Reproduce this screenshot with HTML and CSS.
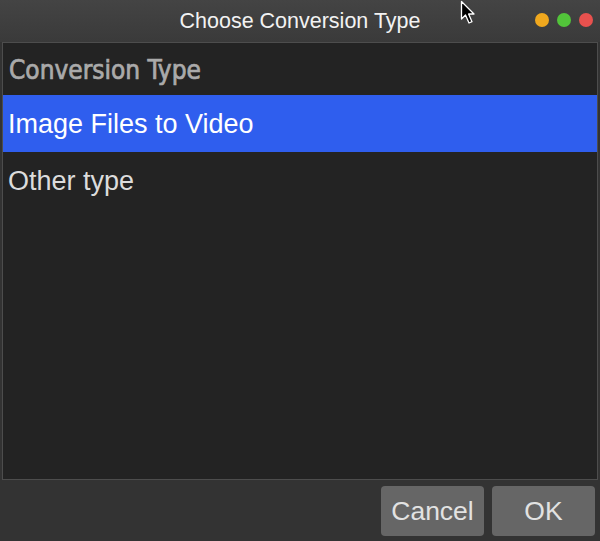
FILE: index.html
```html
<!DOCTYPE html>
<html>
<head>
<meta charset="utf-8">
<link rel="stylesheet" href="styles.css">
</head>
<body>
<div class="window">
  <div class="titlebar">
    <div class="title">Choose Conversion Type</div>
    <div class="dots">
      <span class="dot dot-min"></span>
      <span class="dot dot-max"></span>
      <span class="dot dot-close"></span>
    </div>
  </div>
  <div class="content">
    <div class="list">
      <div class="list-header">Conversion Type</div>
      <div class="row selected">Image Files to Video</div>
      <div class="row">Other type</div>
    </div>
  </div>
  <div class="footer">
    <button class="btn">Cancel</button>
    <button class="btn">OK</button>
  </div>
  <svg class="cursor" width="18" height="26" viewBox="0 0 18 26">
    <path d="M1.5 1.5 L1.5 19 L5.5 15 L9 23 L12 21.7 L8.6 14 L14 14 Z" fill="#000" stroke="#fff" stroke-width="1.3" stroke-linejoin="round"/>
  </svg>
</div>
</body>
</html>
```
FILE: styles.css
```css
* { box-sizing: border-box; }
html, body { margin: 0; padding: 0; background: #333333; }
.window {
  position: relative;
  width: 600px;
  height: 541px;
  background: #333333;
  display: flex;
  flex-direction: column;
  font-family: "Liberation Sans", Arial, sans-serif;
  overflow: hidden;
}
.titlebar {
  position: relative;
  height: 42px;
  flex: none;
  background: linear-gradient(#444444, #3a3a3a);
  display: flex;
  align-items: center;
  justify-content: center;
}
.title {
  color: #f2f2f2;
  font-size: 21.5px;
  padding-top: 1px;
}
.dots {
  position: absolute;
  right: 7px;
  top: 13px;
  display: flex;
  gap: 8px;
}
.dot {
  width: 14px;
  height: 14px;
  border-radius: 50%;
  display: block;
}
.dot-min { background: #f0a81e; }
.dot-max { background: #52c43a; }
.dot-close { background: #e8514e; }
.content {
  padding: 0 2px;
  height: 438px;
  flex: none;
}
.list {
  height: 100%;
  background: #232323;
  border: 1px solid #4d4d4d;
}
.list-header {
  height: 52px;
  padding: 12px 0 0 6px;
  font-family: "DejaVu Sans Condensed", "DejaVu Sans", sans-serif;
  font-stretch: condensed;
  font-weight: normal;
  font-size: 26px;
  color: #aaaaaa;
  -webkit-text-stroke: 0.7px #aaaaaa;
}
.row {
  height: 57px;
  padding: 14px 0 0 5px;
  font-size: 27px;
  color: #dcdcdc;
}
.row.selected {
  background: #2f5eee;
  color: #ffffff;
}
.footer {
  flex: 1;
  display: flex;
  justify-content: flex-end;
  align-items: flex-start;
  gap: 8px;
  padding: 6px 5px 0 0;
}
.btn {
  width: 103px;
  height: 50px;
  background: #666666;
  border: none;
  border-radius: 4px;
  color: #e2e2e2;
  font-family: "Liberation Sans", Arial, sans-serif;
  font-size: 26.5px;
  padding: 0;
}
.cursor {
  position: absolute;
  left: 460px;
  top: 0;
}
```
